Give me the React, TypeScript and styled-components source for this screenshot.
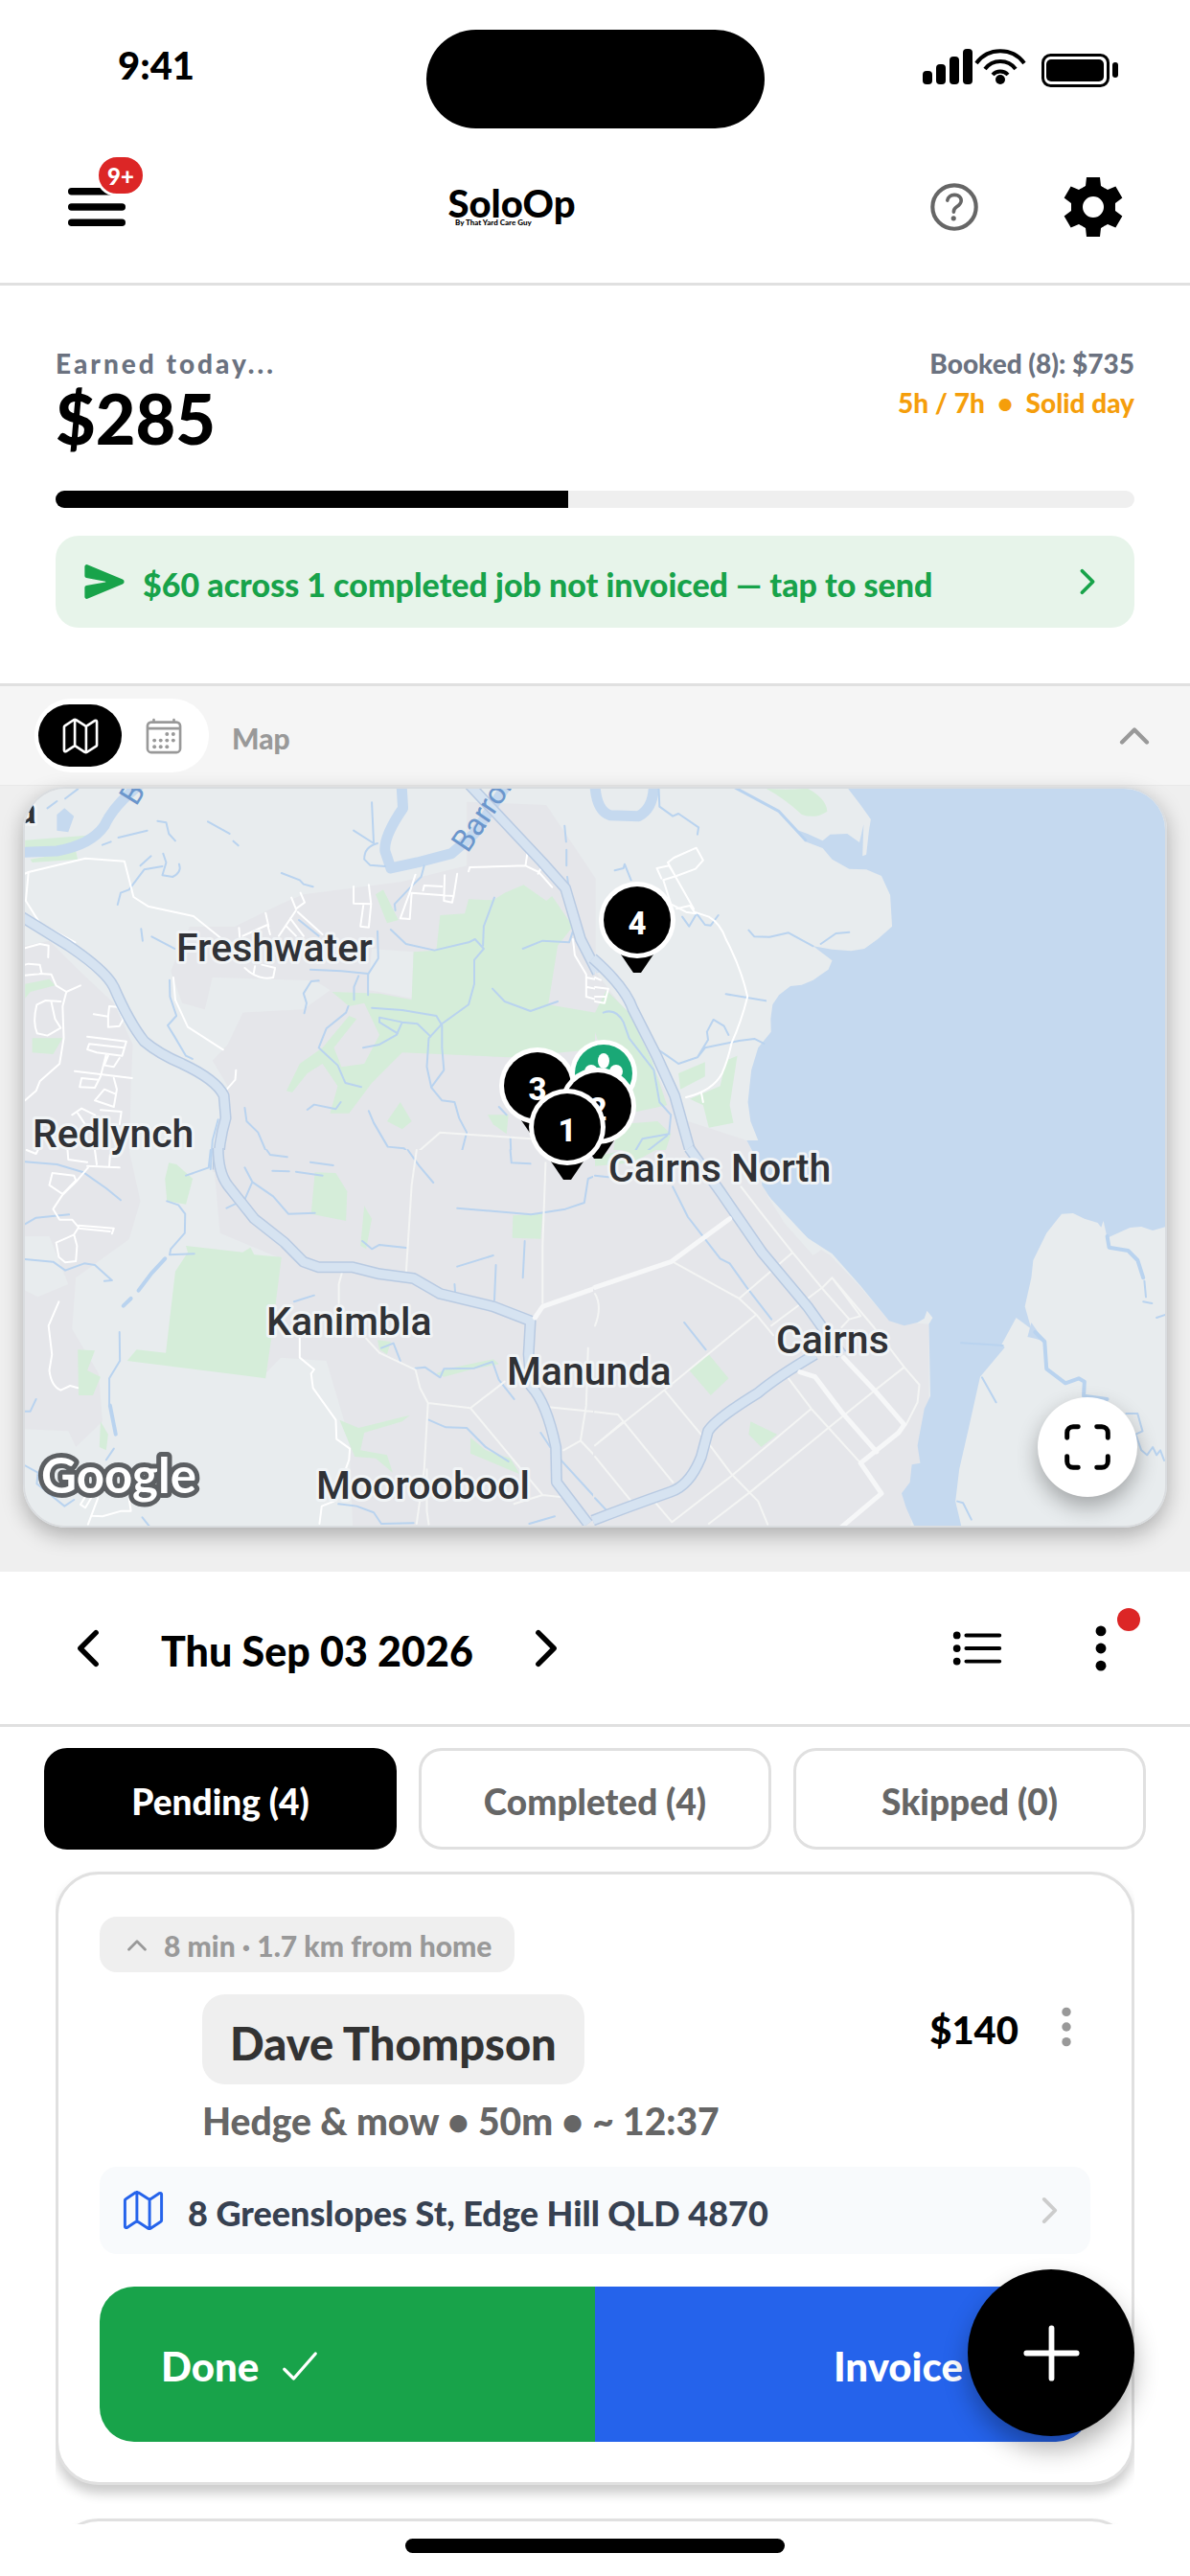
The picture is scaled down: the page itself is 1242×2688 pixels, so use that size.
import React from "react";
import styled, { createGlobalStyle } from "styled-components";
import {
  IoAdd,
  IoCalendarOutline,
  IoCheckmark,
  IoChevronBack,
  IoChevronForward,
  IoChevronUp,
  IoEllipsisVertical,
  IoHelpCircleOutline,
  IoListOutline,
  IoMapOutline,
  IoMenu,
  IoScan,
  IoSend,
} from "react-icons/io5";

const line = "#e0e0e0";
const green = "#18a34a";
const blue = "#2563eb";
const muted = "#999999";
const slate = "#6b7280";

const GlobalStyle = createGlobalStyle`
  * { box-sizing: border-box; }
  body {
    margin: 0;
    background: #fff;
    color: #000;
    font-family: Lato, "Noto Sans", sans-serif;
    font-weight: 900;
  }
  button {
    border: 0;
    padding: 0;
    background: none;
    color: inherit;
    font: inherit;
    cursor: pointer;
  }
  svg { display: block; flex: none; }
`;

const Screen = styled.div`
  position: relative;
  display: flex;
  flex-direction: column;
  height: 100vh;
  overflow: hidden;
`;

/* ---------- status bar and header ---------- */

const StatusBar = styled.div`
  display: grid;
  grid-template-columns: 1fr auto 1fr;
  align-items: start;
  flex: none;
  height: 137px;
  padding: 31px 75px 0;
`;

const Clock = styled.time`
  padding-left: 48px;
  font-size: 40px;
  line-height: 74px;
`;

const Island = styled.div`
  width: 353px;
  height: 103px;
  border-radius: 52px;
  background: #000;
`;

const StatusIcons = styled.svg`
  justify-self: end;
  margin-top: 19px;
`;

const Header = styled.header`
  display: flex;
  align-items: center;
  flex: none;
  height: 161px;
  padding: 0 70px 0 61px;
  border-bottom: 3px solid ${line};
`;

const IconButton = styled.button<{ $color?: string }>`
  position: relative;
  display: flex;
  align-items: center;
  justify-content: center;
  flex: none;
  color: ${(p) => p.$color ?? "#000"};
`;

const CountBadge = styled.span`
  position: absolute;
  left: 39px;
  top: -15px;
  width: 52px;
  height: 44px;
  border: 3px solid #fff;
  border-radius: 22px;
  background: #dc2626;
  color: #fff;
  font-size: 24px;
  line-height: 40px;
  text-align: center;
`;

const Logo = styled.div`
  flex: 1;
  display: flex;
  flex-direction: column;
  align-items: center;
`;

const LogoName = styled.span`
  font-size: 40px;
  line-height: 32px;
`;

const LogoTag = styled.span`
  width: 118px;
  font-size: 8px;
  line-height: 8px;
`;

const HeaderActions = styled.div`
  display: flex;
  align-items: center;
  gap: 81px;
  padding-left: 36px;
`;

/* ---------- earnings summary ---------- */

const Summary = styled.section`
  flex: none;
  padding: 61px 58px 58px;
  border-bottom: 3px solid ${line};
`;

const SummaryTop = styled.div`
  display: flex;
  justify-content: space-between;
  height: 113px;
`;

const SummaryNote = styled.div<{ $color: string; $spacing?: number; $right?: boolean }>`
  color: ${(p) => p.$color};
  font-size: 28px;
  line-height: 41px;
  letter-spacing: ${(p) => p.$spacing ?? 0}px;
  text-align: ${(p) => (p.$right ? "right" : "left")};
  white-space: pre;
`;

const Earned = styled.div`
  font-size: 72px;
  line-height: 72px;
`;

const Progress = styled.div`
  height: 18px;
  margin-top: 40px;
  overflow: hidden;
  border-radius: 9px;
  background: #efefef;
`;

const ProgressFill = styled.div`
  height: 100%;
  background: #000;
`;

const Banner = styled.button`
  display: flex;
  align-items: center;
  gap: 18px;
  width: 100%;
  height: 96px;
  margin-top: 29px;
  padding: 0 29px;
  border-radius: 24px;
  background: #e7f4ea;
  color: ${green};
  font-size: 34px;
  text-align: left;
`;

const Grow = styled.span`
  flex: 1;
  padding-top: 4px;
`;

/* ---------- map ---------- */

const MapBar = styled.div`
  display: flex;
  align-items: center;
  flex: none;
  height: 104px;
  padding: 0 35px 0 36px;
  border-bottom: 1px solid #e9e9e9;
  background: #f5f5f5;
  color: ${muted};
`;

const ViewSwitch = styled.div`
  display: flex;
  height: 77px;
  padding: 6px 4px;
  border-radius: 38px;
  background: #fff;
`;

const ViewOption = styled.button<{ $active?: boolean }>`
  display: flex;
  align-items: center;
  justify-content: center;
  width: 87px;
  height: 65px;
  border-radius: 33px;
  background: ${(p) => (p.$active ? "#000" : "transparent")};
  color: ${(p) => (p.$active ? "#fff" : muted)};
`;

const MapTitle = styled.h2`
  flex: 1;
  margin: 0;
  padding: 4px 0 0 24px;
  font-size: 30px;
  font-weight: 900;
`;

const MapArea = styled.section`
  flex: none;
  padding: 1px 24px 46px;
  background: #efefef;
`;

const MapCard = styled.div`
  position: relative;
  height: 773px;
  overflow: hidden;
  border: 2px solid #d9dcdf;
  border-radius: 45px;
  box-shadow: 0 8px 22px rgba(0, 0, 0, 0.28);
`;

const MapDrawing = styled.svg`
  width: 100%;
  height: 100%;
  path { fill: none; stroke-linejoin: round; stroke-linecap: round; vector-effect: non-scaling-stroke; }
  .urban { fill: #e5e6ea; }
  .park { fill: #d5edd9; }
  .sea { fill: #c5d9ef; }
  .land { fill: #e8ecee; }
  .river { stroke: #c5d9ef; stroke-width: 11; }
  .creek { stroke: #b9d3ef; stroke-width: 2; }
  .casing { stroke: #b8cae2; stroke-width: 12; stroke-linecap: butt; }
  .highway { stroke: #d6e3f1; stroke-width: 9; stroke-linecap: butt; }
  .main { stroke: #f6f7f8; stroke-width: 5; }
  .street { stroke: #fff; stroke-width: 2; }
  .lane { stroke: #f4f5f4; stroke-width: 2; }
`;

const PlaceName = styled.text`
  fill: #303236;
  font: 500 41px Roboto, sans-serif;
  stroke: #f1f4f6;
  stroke-width: 6px;
  stroke-linejoin: round;
  paint-order: stroke;
`;

const RiverName = styled.text`
  fill: #6b96cc;
  font: 400 32px Roboto, sans-serif;
`;

const GoogleMark = styled.text`
  fill: #fff;
  font: 700 51px Lato, sans-serif;
  stroke: #5c5f62;
  stroke-width: 10px;
  stroke-linejoin: round;
  paint-order: stroke;
`;

const PinNumber = styled.text`
  fill: #fff;
  font: 800 33px Roboto, sans-serif;
  text-anchor: middle;
`;

const ExpandButton = styled.button`
  position: absolute;
  right: 29px;
  bottom: 30px;
  display: flex;
  align-items: center;
  justify-content: center;
  width: 104px;
  height: 104px;
  border-radius: 50%;
  background: #fff;
  box-shadow: 0 10px 22px rgba(0, 0, 0, 0.3);
`;

/* ---------- date bar and tabs ---------- */

const DateBar = styled.div`
  display: flex;
  align-items: center;
  flex: none;
  height: 162px;
  padding: 0 64px 0 63px;
  border-bottom: 3px solid ${line};
`;

const DateNav = styled.div`
  display: flex;
  align-items: center;
  flex: 1;
  gap: 47px;
`;

const DateText = styled.span`
  padding-top: 6px;
  font-size: 43px;
`;

const DateActions = styled.div`
  display: flex;
  align-items: center;
  gap: 69px;
`;

const AlertDot = styled.span`
  position: absolute;
  top: -13px;
  right: -12px;
  width: 24px;
  height: 24px;
  border-radius: 50%;
  background: #dc2626;
`;

const Tabs = styled.div`
  display: flex;
  flex: none;
  gap: 23px;
  padding: 22px 46px 0;
`;

const Tab = styled.button<{ $active?: boolean }>`
  flex: 1;
  height: 106px;
  padding-top: 4px;
  border: 3px solid ${(p) => (p.$active ? "#000" : line)};
  border-radius: 24px;
  background: ${(p) => (p.$active ? "#000" : "#fff")};
  color: ${(p) => (p.$active ? "#fff" : "#666")};
  font-size: 37px;
`;

/* ---------- job list ---------- */

const JobList = styled.main`
  display: flex;
  flex-direction: column;
  flex: 1;
  gap: 35px;
  min-height: 0;
  margin: 0 58px;
  padding-top: 23px;
  overflow: hidden;
`;

const JobCard = styled.article`
  flex: none;
  min-height: 160px;
  padding: 44px 43px 42px;
  border: 3px solid ${line};
  border-radius: 45px;
  background: #fff;
  box-shadow: 0 9px 12px rgba(0, 0, 0, 0.2);
`;

const TravelChip = styled.div`
  display: flex;
  align-items: center;
  gap: 13px;
  width: fit-content;
  height: 58px;
  padding: 2px 24px 0;
  border-radius: 18px;
  background: #efefef;
  color: ${muted};
  font-size: 30px;
`;

const JobTop = styled.div`
  display: flex;
  align-items: flex-start;
  gap: 25px;
  margin-top: 23px;
  padding-left: 107px;
`;

const ClientName = styled.h3`
  height: 94px;
  margin: 0 auto 0 0;
  padding: 8px 29px 0;
  border-radius: 24px;
  background: #efefef;
  color: #333;
  font-size: 47px;
  font-weight: 900;
  line-height: 86px;
`;

const Price = styled.span`
  font-size: 40px;
  line-height: 74px;
`;

const JobMenu = styled(IconButton)`
  height: 68px;
`;

const JobMeta = styled.p`
  margin: 15px 0 25px;
  padding-left: 107px;
  color: #666;
  font-size: 39px;
  line-height: 46px;
`;

const Address = styled.a`
  display: flex;
  align-items: center;
  gap: 23px;
  height: 91px;
  padding: 0 22px;
  border-radius: 18px;
  background: #f8fafc;
  color: #374151;
  font-size: 36px;
  text-decoration: none;
`;

const JobActions = styled.div`
  display: flex;
  height: 162px;
  margin-top: 34px;
  overflow: hidden;
  border-radius: 36px;
`;

const JobAction = styled.button<{ $color: string; $end?: boolean }>`
  display: flex;
  align-items: center;
  justify-content: ${(p) => (p.$end ? "flex-end" : "flex-start")};
  flex: 1;
  gap: 17px;
  padding: 4px 64px 0;
  background: ${(p) => p.$color};
  color: #fff;
  font-size: 42px;
`;

const AddButton = styled.button`
  position: absolute;
  right: 58px;
  bottom: 146px;
  display: flex;
  align-items: center;
  justify-content: center;
  width: 174px;
  height: 174px;
  border-radius: 50%;
  background: #000;
  color: #fff;
  box-shadow: 0 14px 26px rgba(0, 0, 0, 0.3);
`;

const HomeArea = styled.div`
  display: flex;
  justify-content: center;
  flex: none;
  height: 54px;
  padding-top: 15px;
`;

const HomeBar = styled.div`
  width: 396px;
  height: 15px;
  border-radius: 8px;
  background: #000;
`;

/* ---------- drawings ---------- */

function GearIcon() {
  const teeth = [0, 60, 120, 180, 240, 300];
  return (
    <svg width="62" height="62" viewBox="-31 -31 62 62" aria-hidden="true">
      <circle r="17" fill="none" stroke="#000" strokeWidth="12" />
      {teeth.map((angle) => (
        <path key={angle} d="M-11 -20 L-8 -22 L-7 -31 H7 L8 -22 L11 -20 L8 -16 H-8Z" transform={`rotate(${angle})`} />
      ))}
    </svg>
  );
}

function PhoneStatus() {
  return (
    <StatusIcons width="204" height="43" viewBox="0 0 204 43" aria-hidden="true">
      <rect x="0" y="24" width="10" height="14" rx="4" />
      <rect x="14" y="17" width="10" height="21" rx="4" />
      <rect x="28" y="9" width="10" height="29" rx="4" />
      <rect x="42" y="1" width="10" height="37" rx="4" />
      <g fill="none" stroke="#000" strokeWidth="4">
        <path d="M56 16 A31 31 0 0 1 106 16" />
        <path d="M65 22 A20 20 0 0 1 97 22" />
        <path d="M73 28 A11 11 0 0 1 89 28" />
      </g>
      <circle cx="81" cy="33" r="5" />
      <rect x="125.500" y="7.500" width="68" height="32" rx="8" fill="none" stroke="#000" strokeWidth="3" />
      <rect x="129" y="12" width="60" height="23" rx="5" />
      <rect x="198" y="15" width="6" height="16" rx="3" />
    </StatusIcons>
  );
}

function Tile({ x, y, children }: { x: number; y: number; children: React.ReactNode }) {
  return <g transform={`translate(${x} ${y}) scale(0.396 0.3333)`}>{children}</g>;
}

function Road({ d }: { d: string }) {
  return (
    <>
      <path className="casing" d={d} />
      <path className="highway" d={d} />
    </>
  );
}

function Pin({ x, y, label }: { x: number; y: number; label: string }) {
  return (
    <g transform={`translate(${x} ${y})`}>
      <path d="M-17 36 H17 L4 55 H-4Z" style={{ fill: "#000" }} />
      <circle r="40" fill="#fff" />
      <circle r="35" fill="#000" />
      <PinNumber y="15">{label}</PinNumber>
    </g>
  );
}

function CairnsMap() {
  return (
    <MapDrawing viewBox="26 823 1190 769" preserveAspectRatio="xMidYMid slice" role="img" aria-label="Map of Cairns">
      <rect x="-400" y="400" width="2042" height="1600" fill="#e8ecee" />

      <Tile x={0} y={800}>
        <path className="urban" d="M0 560 L66 560 L130 545 L210 640 L300 740 L350 870 L345 1000 L340 1270 L0 1270Z" />
        <path className="urban" d="M500 500 L620 500 L740 430 L800 400 L1060 360 L1230 310 L1230 110 L1440 120 L1570 350 L1570 1270 L560 1270 L600 1000 L560 920 L600 870 L640 770 L800 760 L870 700 L830 670 L560 660 L540 760 L480 740 L450 640Z" />
        <path className="land" d="M980 570 L1090 580 L1085 725 L1000 705 L970 700Z" />
        <path className="park" d="M1160 465 L1225 460 L1235 415 L1300 418 L1330 395 L1380 370 L1440 420 L1455 405 L1510 500 L1470 560 L1445 745 L1570 770 L1570 885 L1340 910 L1060 895 L980 990 L920 1085 L870 1085 L890 1000 L850 930 L810 960 L770 1020 L755 1015 L790 930 L850 880 L920 780 L940 790 L880 880 L900 940 L960 930 L1000 840 L960 740 L920 750 L875 705 L1000 710 L1085 730 L1090 580 L1150 575Z" />
        <path className="park" d="M990 400 L1010 385 L1050 480 L1020 490Z" />
        <path className="park" d="M66 230 L230 215 L200 260 L66 275Z" />
        <path className="park" d="M80 290 L200 265 L205 290 L85 300Z" />
        <path className="park" d="M66 680 L130 665 L145 685 L80 705 L66 725Z" />
        <path className="park" d="M85 850 L165 850 L140 900 L85 895Z" />
        <path className="park" d="M1055 1050 L1085 1110 L1060 1135 L1020 1110Z" />
        <path className="park" d="M1285 1090 L1340 1090 L1335 1150 L1300 1120Z" />
        <path className="sea" d="M150 150 L170 130 L195 155 L180 205 L150 200Z" />
        <path className="river" d="M60 268 L150 264 Q240 245 275 185 Q300 120 370 55" />
        <path className="river" d="M1058 50 L1062 130 Q1010 220 1015 265 L1030 318 L1100 300 L1190 272 L1250 210 L1340 50" />
        <path className="creek" d="M125 130 L150 108 M172 100 L205 70 M312 222 L388 200 M270 245 L292 235 M548 172 L605 210 M615 233 L628 247" />
        <path className="creek" d="M415 170 L438 175 L445 210 L462 232 M370 310 L398 280 M430 272 L438 300 L428 340 L455 345 Q480 330 472 305 M428 312 L380 322 L340 385 L318 395 L310 432" />
        <path className="creek" d="M742 333 L790 355 L800 368 L825 376 M980 112 L985 240 L932 200 M995 240 Q960 250 960 290 L975 308 L1015 312 M1118 310 L1110 345 L1080 380 L1040 430 L1042 450" />
        <path className="creek" d="M1030 510 L1070 555 L1145 575 L1235 550 L1252 540 L1275 570 L1250 605 L1250 680 L1235 745 L1165 805 L1130 850 L1125 940 L1137 1005 L1165 1045 L1198 1050 L1210 1100 L1230 1145 L1215 1215" />
        <path className="creek" d="M1303 410 L1275 500 L1273 560 M1378 570 L1430 545 L1500 550 L1510 515 M1298 695 L1330 735 L1398 765 L1470 735" />
        <path className="creek" d="M980 755 L1060 762 L1150 780 L1165 810 L1165 880 L1170 950 L1137 1003 M1135 845 L1100 805 L1060 800 L1045 840 L1000 870 L957 880 M1060 800 L1000 785 L1000 800 L1048 835" />
        <path className="creek" d="M995 515 L997 600 L970 650 L970 715 M818 635 L900 640 L970 648 M945 655 L933 690 L933 730 M918 750 L912 770 L860 820 L840 880 L890 935 L910 990 L952 1003 M840 670 L820 672 L800 710 L808 740 L802 772" />
        <path className="creek" d="M447 668 L448 720 L465 780 L442 810 L460 845 L490 905 L507 915 M372 508 L376 545 M400 532 L460 570 M788 480 L840 530" />
        <path className="creek" d="M645 1068 L650 1110 L680 1145 L705 1215 L757 1225 M810 1074 L828 1058 L885 1072 L898 1050 M972 1078 L985 1115 L1022 1190 L1065 1195 L1115 1260 M575 1105 L560 1170 L555 1260 M1345 1160 L1348 1240 L1395 1243 M66 1235 L180 1248 M818 1240 L850 1250 L878 1248" />
        <path className="creek" d="M1488 185 L1492 235 M1493 260 L1493 310 M1495 345 L1500 390 M1315 1065 L1335 1090" />
        <path className="street" d="M66 335 L75 330 L225 287 L328 296 L352 408 L390 437 L510 468 L580 535 M75 332 L68 420 L105 490 L198 550" />
        <path className="street" d="M932 375 L932 428 L978 430 L972 370 M958 430 L950 500 L972 503 L978 430 M1095 338 L1078 400 L1055 475 L1080 477 L1085 395 L1195 405 L1192 425 L1170 420 L1172 340 M1205 335 L1195 410 M1165 375 L1118 372 L1115 388 M1235 328 L1238 315 L1385 310 L1390 270 M1385 310 L1420 330 L1455 377 M1425 320 L1418 335" />
        <path className="street" d="M768 410 L780 445 L803 425 L792 395 M780 450 L735 530 M785 455 L850 525 M765 475 L800 530 M755 500 L780 530 M630 505 L632 535 M640 530 L705 495 L712 525 M700 458 L708 500 M645 630 Q680 670 720 660 L725 630 L690 620 M668 650 L672 625" />
        <path className="street" d="M457 660 L462 730 L495 815 L588 886 M622 950 L620 980 L598 1010" />
        <path className="street" d="M66 568 L105 555 L128 560 L127 597 M66 620 L75 617 L105 620 L110 648 L66 653 M105 648 L135 650 L148 685 L175 705 L212 685 M175 705 L165 750 L168 850 L157 930 L105 985 L95 1015 L66 1045" />
        <path className="street" d="M160 735 L120 732 L97 745 Q85 800 98 835 L125 842 L160 818 M135 735 L145 790 L160 818 M247 775 L285 782 L288 750 L310 752 L325 790 L315 812 L285 815 L285 782" />
        <path className="street" d="M230 845 L333 860 L322 905 L255 895 L230 885 L235 868 L325 880 M280 900 L265 970 L250 1005 L210 1003 L215 975 L260 980 M197 953 L348 975 M285 905 L275 935 L300 940 L315 912 M300 975 L308 1010 L300 1065 L250 1045 L275 1010 L305 1025 M190 1090 L215 1070 L250 1090 L260 1115 M205 1085 L230 1130 M265 1075 L320 1080 L315 1120 M66 1205 L95 1215 M175 1190 L180 1230 L225 1245 L290 1250 M230 1200 L235 1245 M290 1215 L290 1250" />
        <path className="lane" d="M1095 1260 L1098 1210 L1160 1145 L1400 1165" />
        <path className="street" d="M1510 540 L1515 590 L1545 650 L1545 720 L1568 728 M1545 660 L1568 665 M1548 690 L1568 695" />
        <Road d="M50 465 L180 560 Q280 640 300 690 Q340 800 380 860 Q420 900 480 930 Q570 980 590 1030 L595 1100 Q575 1180 575 1262" />
        <Road d="M1232 50 L1430 300 L1490 380 L1530 540 L1575 645" />
      </Tile>

      <Tile x={621} y={800}>
        <path className="urban" d="M0 640 L90 780 L150 930 L220 1100 L400 1170 L440 1265 L0 1265Z" />
        <path className="park" d="M30 700 L90 770 L150 920 L190 1060 L110 1080 L60 1050 L0 830 L0 770Z" />
        <path className="park" d="M60 1120 L165 1110 L200 1150 L170 1265 L40 1265Z" />
        <path className="park" d="M220 960 L290 925 L290 970 L225 1010Z" />
        <path className="park" d="M345 920 L375 905 L355 1060 L365 1115 L300 1130 L285 1060 L250 1040 L330 1000Z" />
        <path className="land" d="M380 870 L430 870 L410 1000 L430 1190 L380 1150Z" />
        <path className="sea" d="M655 50 L700 120 L727 165 L722 200 L715 275 L705 280 L708 180 L697 237 L665 210 L620 212 L600 232 L560 210 L525 195 L555 235 L600 255 L625 290 L670 320 L715 322 L755 342 L778 402 L783 500 L745 540 L710 570 L675 577 L625 572 L575 562 L625 607 L615 635 L575 668 L545 683 L515 687 L485 715 L468 745 L463 790 L464 830 L430 880 L412 950 L403 1050 L410 1110 L430 1170 L442 1270 L1800 1270 L1800 50Z" />
        <path className="park" d="M450 68 Q500 75 560 68 Q610 100 612 140 Q580 165 545 150 Q500 100 450 68Z" />
        <path className="river" d="M0 60 Q5 140 40 152 L115 155 Q155 130 155 55" />
        <path className="creek" d="M168 68 L170 125 L205 155 L220 147 L273 190 L270 212 M52 325 L75 318 L78 305 L95 355 M230 470 L248 500 L268 460 L290 495 L305 497 L325 465" />
        <path className="creek" style={{ strokeWidth: 3 }} d="M368 65 L485 140 L530 198 L555 230" />
        <path className="creek" d="M405 512 L420 532 L460 533 L510 520 L575 562 M595 555 L635 522 L670 518 M345 712 L450 733 M165 885 L190 905 L220 930 L270 910 L290 880 L380 858 L420 852 L445 867 M270 910 L298 855 L295 830 L312 792 L340 812 L352 840" />
        <path className="creek" d="M22 770 Q55 755 75 800 L90 850 L155 950 L170 1050 L200 1090 L195 1150 L125 1165 L105 1205 M190 1155 L125 1215" />
        <path className="street" d="M192 300 L208 285 L267 254 L285 293 L265 320 L215 342 L180 355 L200 430 L240 455 L265 460 M192 300 L215 350 L260 445 M163 318 L195 310 L208 335 M175 350 L163 318 M215 445 L250 435 L262 455 L300 470 Q330 490 345 540 Q385 630 402 720 Q385 800 360 865 Q350 920 335 960 Q310 1015 240 1035 M280 1020 L285 1050" />
        <path className="street" d="M0 660 L15 668 M0 690 L35 695 L25 740 L0 735 M0 720 L28 720" />
        <Road d="M-6 600 Q80 690 100 760 L160 900 L210 1030 L250 1200 L270 1262" />
      </Tile>

      <Tile x={0} y={1200}>
        <path className="urban" d="M0 0 L340 0 L370 160 L340 280 L200 400 L190 560 L260 700 L270 850 L200 930 L180 880 L0 870Z" />
        <path className="urban" d="M560 0 L1575 0 L1575 1190 L930 1190 L920 900 L860 660 L740 650 L700 700 L740 340 L580 260Z" />
        <path className="land" d="M66 270 L130 270 L180 420 L100 460 L66 440Z" />
        <path className="park" d="M445 40 L465 45 L508 90 L490 170 L440 160 L435 90Z" />
        <path className="park" d="M490 300 L640 320 L660 305 L670 328 L742 335 L715 590 L700 715 L335 660 L360 625 L437 635 L462 380 L495 320Z" />
        <path className="park" d="M830 70 L885 72 L915 130 L912 222 L820 200Z" />
        <path className="park" d="M960 175 L980 215 L965 310 L950 300Z" />
        <path className="park" d="M1352 205 L1430 198 L1425 278 L1350 275Z" />
        <path className="park" d="M205 625 L250 628 L230 690 L265 710 L245 768 L207 768Z" />
        <path className="park" d="M265 850 L285 890 L280 940 L262 930Z" />
        <path className="park" d="M895 845 L945 870 L1080 830 L1060 850 L960 885 L950 940 L1020 955 L1035 1010 L990 965 L935 960Z" />
        <path className="park" d="M1240 900 L1280 940 L1345 965 L1370 1015 L1320 990 L1240 950Z" />
        <path className="park" d="M995 595 L1030 600 L1020 640 L1000 625Z M1150 700 L1180 685 L1300 655 L1315 670 L1250 685 L1170 710Z" />
        <path className="creek" d="M66 37 L150 45 L220 70 L280 120 L318 157 M66 232 L95 212 L182 202 M66 342 L140 350 L172 377 L222 355 L250 360 L295 408 L275 410 M440 160 L470 172 L488 200 L487 260 L450 310 L447 328 L512 325" />
        <path className="creek" style={{ strokeWidth: 4 }} d="M435 340 L400 385 L365 440 M345 465 L325 488 M290 800 L305 890" />
        <path className="creek" d="M315 570 L316 660 L288 715 L288 800 M95 780 L80 818 L66 818 M66 988 L100 1010 L97 1045 L170 1115 L195 1095 M300 935 L280 970 M375 1150 L395 1180 M555 0 L550 55 L490 80 L510 72" />
        <path className="creek" d="M645 55 L665 100 L645 155 L597 182 M665 100 L720 145 L760 200 L830 197 M703 0 L712 15 L757 22 M718 65 L762 67 M780 68 L850 80 M818 38 L878 48 M955 285 L980 310 L1000 297 L1070 306 M1075 0 L1105 50 L1142 102 M775 475 L828 455" />
        <path className="creek" d="M1205 182 L1400 202 L1490 185 L1540 165 L1550 90 L1570 80 M1345 0 L1348 40 L1398 43 M1205 365 L1300 330 M1383 285 L1378 400 M1307 360 L1303 470 M1198 420 L1200 450 M1005 620 L1037 605 L1055 660 M1095 683 L1120 680 L1160 712 L1170 685 L1250 683 L1298 663 L1315 720 L1355 780 M1130 845 L1175 868 L1230 870 L1280 930 L1340 975 M1425 885 L1450 930 M1470 960 L1570 1090 M892 1108 L940 1115 L985 1135 L1005 1170 L1090 1168 M1395 1170 L1462 1147" />
        <path className="street" d="M138 72 L195 80 L200 95 L165 138 L130 110 L138 72 M232 55 L200 100 L165 140 L140 185 L157 218 L190 218 L207 242 L195 265 L148 290 L155 335 L172 352 L200 348 L203 300 L195 265 M207 236 L300 245 L295 262 M207 245 L290 255 M70 0 L95 12 L100 0 M178 0 L180 30 L230 38 M230 50 L315 55 M250 0 L255 45 M290 15 L288 50" />
        <path className="street" d="M155 475 L128 550 L137 640 L130 690 Q135 740 160 752 L185 738 L205 745 M790 580 L790 650 L828 687 L820 700 L825 745 L885 845 L887 905 L922 935 L920 970 L880 1100 L848 1115 L842 1170 M258 1090 L232 1172 M243 1145 L270 1147 L320 1130 L345 1130 L340 1090 M212 1110 L225 1120 L240 1090 M212 1110 L225 1085" />
        <path className="lane" d="M1098 0 L1085 110 L1070 390 M902 380 L893 420 L893 480 M965 590 L1000 635 L1095 688 L1107 745 L1128 792 L1118 1000 L1098 1170 M1128 792 L1240 808 L1330 725 M1240 808 L1430 1080 L1490 1088 M1430 1080 L1355 1108 M1438 40 L1430 300 L1430 480 M1445 805 L1570 820 M1550 620 L1545 800 L1530 910 L1485 940 M1530 910 L1570 960 M1125 1000 L1125 1130 L1130 1172" />
        <Road d="M575 -6 Q575 70 600 110 L670 215 L750 290 L800 350 L840 367 L930 367 L1000 388 L1090 402 L1160 450 L1300 490 L1398 535 L1393 640 L1400 740 Q1440 790 1465 930 L1467 1040 L1550 1170" />
        <path className="main" d="M1410 525 L1430 490 L1575 430" />
      </Tile>

      <Tile x={621} y={1200}>
        <path className="urban" d="M-5 0 L420 0 L450 130 L560 285 L620 330 L700 430 L775 535 L880 545 L880 800 L855 980 L830 1190 L-5 1190Z" />
        <path className="sea" d="M400 -30 L440 60 L440 110 L470 165 L560 275 L625 325 L700 425 L775 535 L815 550 L850 540 L868 527 L875 503 L890 525 L880 545 L884 770 L868 810 L850 925 L857 980 L835 985 L830 1040 L808 1075 L820 1120 L850 1200 L970 1200 L950 1100 L960 1000 L985 870 L1015 710 L1080 618 L1072 608 L1110 525 L1150 560 L1133 490 L1150 400 L1155 345 L1190 260 L1230 200 L1260 198 L1290 215 L1325 228 L1334 242 L1340 222 L1350 275 L1410 243 L1440 240 L1470 252 L1520 235 L1800 200 L1800 -30Z" />
        <path className="land" d="M450 135 L560 275 L600 310 L575 330 L500 230Z" />
        <path className="sea" d="M1150 540 L1185 600 L1160 590 L1140 585Z" />
        <path className="creek" style={{ strokeWidth: 4 }} d="M1160 570 L1185 600 L1190 685 L1240 730 L1275 715 L1290 725 L1288 770 L1350 780 M1350 270 L1355 305 L1405 315 L1430 345 L1445 400" />
        <path className="creek" d="M1448 410 L1452 460 M1445 475 L1468 480 M1480 525 L1505 515 M1020 712 L1057 790 M965 604 L1075 612 M955 1100 L970 1105 L992 1157 M1400 825 L1430 825 L1443 880 L1425 890 L1440 940 L1455 955 L1470 930 L1480 955 L1490 940 L1500 972" />
        <path className="park" d="M300 640 L352 715 L305 768 L247 688Z" />
        <path className="park" d="M410 850 L480 890 L438 930 L405 890Z" />
        <path className="park" d="M0 20 L80 0 L160 0 L100 40 L0 50Z" />
        <path className="creek" d="M205 115 L245 210 L330 340 L355 355 L400 430 L465 530 M235 540 L292 625 M0 80 L35 85 M0 1090 L32 1130" />
        <path className="lane" d="M385 115 L440 200 L520 320 L600 435 L670 530 L700 520 L625 400 L600 430 L465 550 M625 400 L735 555 L815 680 L855 735 L850 790 L820 860 M520 322 L380 465 L205 350 M380 465 L425 515 L470 580 M425 515 L190 745 L0 925 M185 755 L300 920 L360 1015 L430 1100 L455 1172 M0 820 L60 828 L75 850 L205 1040 M75 850 L0 925 M0 960 L98 1103 M160 1105 L203 1165 L360 1020 L570 810 L510 715 M570 810 L700 980 M300 1170 L410 1070 L615 870 L740 750 L815 680 M0 450 Q20 490 0 550 M670 530 L650 555" />
        <Road d="M248 -6 L330 130 L440 320 L560 490 L650 640" />
        <Road d="M580 640 Q480 710 430 760 Q320 840 298 880 L280 960 Q250 1050 200 1070 Q80 1120 -6 1160" />
        <path className="main" d="M0 430 L200 350 L355 215 M655 650 L735 750 L815 860 L800 885 L700 980 L755 1075 L650 1180 M540 695 L580 710 L650 820 L742 945" />
      </Tile>

      <RiverName transform="translate(488 891) rotate(-56)">Barron</RiverName>
      <RiverName transform="translate(142 842) rotate(-58)">B</RiverName>
      <PlaceName x="16" y="859">a</PlaceName>
      <PlaceName x="184" y="1003">Freshwater</PlaceName>
      <PlaceName x="34" y="1197">Redlynch</PlaceName>
      <PlaceName x="635" y="1233">Cairns North</PlaceName>
      <PlaceName x="278" y="1393">Kanimbla</PlaceName>
      <PlaceName x="810" y="1412">Cairns</PlaceName>
      <PlaceName x="529" y="1445">Manunda</PlaceName>
      <PlaceName x="330" y="1564">Mooroobool</PlaceName>
      <GoogleMark x="43" y="1558">Google</GoogleMark>

      <Pin x={665} y={960} label="4" />
      <Pin x={561} y={1133} label="3" />
      <g transform="translate(630 1120)">
        <circle r="35" fill="#fff" />
        <circle r="30" fill="#1aa876" />
        <ellipse cy="-13" rx="6" ry="8" fill="#fff" />
        <circle cx="-13" cy="-2" r="7" fill="#fff" />
        <circle cx="13" cy="-2" r="7" fill="#fff" />
        <circle cy="4" r="7" fill="#fff" />
      </g>
      <Pin x={624} y={1154} label="2" />
      <Pin x={592} y={1176} label="1" />
    </MapDrawing>
  );
}

/* ---------- page ---------- */

const earned = 285;
const progress = 47.5;

export default function App() {
  return (
    <Screen>
      <GlobalStyle />
      <StatusBar>
        <Clock>9:41</Clock>
        <Island />
        <PhoneStatus />
      </StatusBar>

      <Header>
        <IconButton aria-label="Menu">
          <IoMenu size={80} />
          <CountBadge>9+</CountBadge>
        </IconButton>
        <Logo>
          <LogoName>SoloOp</LogoName>
          <LogoTag>By That Yard Care Guy</LogoTag>
        </Logo>
        <HeaderActions>
          <IconButton $color="#666" aria-label="Help">
            <IoHelpCircleOutline size={66} />
          </IconButton>
          <IconButton aria-label="Settings">
            <GearIcon />
          </IconButton>
        </HeaderActions>
      </Header>

      <Summary>
        <SummaryTop>
          <div>
            <SummaryNote $color={slate} $spacing={3}>Earned today...</SummaryNote>
            <Earned>${earned}</Earned>
          </div>
          <div>
            <SummaryNote $color={slate} $right>Booked (8): $735</SummaryNote>
            <SummaryNote $color="#f59e0b" $right>{"5h / 7h  •  Solid day"}</SummaryNote>
          </div>
        </SummaryTop>
        <Progress>
          <ProgressFill style={{ width: `${progress}%` }} />
        </Progress>
        <Banner>
          <IoSend size={44} />
          <Grow>$60 across 1 completed job not invoiced — tap to send</Grow>
          <IoChevronForward size={40} />
        </Banner>
      </Summary>

      <MapBar>
        <ViewSwitch>
          <ViewOption $active aria-label="Map view">
            <IoMapOutline size={42} />
          </ViewOption>
          <ViewOption aria-label="Calendar view">
            <IoCalendarOutline size={42} />
          </ViewOption>
        </ViewSwitch>
        <MapTitle>Map</MapTitle>
        <IconButton $color={muted} aria-label="Collapse map">
          <IoChevronUp size={46} />
        </IconButton>
      </MapBar>
      <MapArea>
        <MapCard>
          <CairnsMap />
          <ExpandButton aria-label="Full screen map">
            <IoScan size={58} />
          </ExpandButton>
        </MapCard>
      </MapArea>

      <DateBar>
        <DateNav>
          <IconButton aria-label="Previous day">
            <IoChevronBack size={58} />
          </IconButton>
          <DateText>Thu Sep 03 2026</DateText>
          <IconButton aria-label="Next day">
            <IoChevronForward size={58} />
          </IconButton>
        </DateNav>
        <DateActions>
          <IconButton aria-label="List view">
            <IoListOutline size={62} />
          </IconButton>
          <IconButton aria-label="More options">
            <IoEllipsisVertical size={58} />
            <AlertDot />
          </IconButton>
        </DateActions>
      </DateBar>

      <Tabs>
        <Tab $active>Pending (4)</Tab>
        <Tab>Completed (4)</Tab>
        <Tab>Skipped (0)</Tab>
      </Tabs>

      <JobList>
        <JobCard>
          <TravelChip>
            <IoChevronUp size={30} />
            8 min · 1.7 km from home
          </TravelChip>
          <JobTop>
            <ClientName>Dave Thompson</ClientName>
            <Price>$140</Price>
            <JobMenu $color={muted} aria-label="Job options">
              <IoEllipsisVertical size={50} />
            </JobMenu>
          </JobTop>
          <JobMeta>Hedge &amp; mow • 50m • ~ 12:37</JobMeta>
          <Address href="#directions">
            <IoMapOutline size={47} color={blue} />
            <Grow>8 Greenslopes St, Edge Hill QLD 4870</Grow>
            <IoChevronForward size={41} color="#ccc" />
          </Address>
          <JobActions>
            <JobAction $color={green}>
              Done
              <IoCheckmark size={52} />
            </JobAction>
            <JobAction $color={blue} $end>
              Invoice
              <IoSend size={52} />
            </JobAction>
          </JobActions>
        </JobCard>
        <JobCard />
      </JobList>

      <AddButton aria-label="Add job">
        <IoAdd size={93} />
      </AddButton>
      <HomeArea>
        <HomeBar />
      </HomeArea>
    </Screen>
  );
}
